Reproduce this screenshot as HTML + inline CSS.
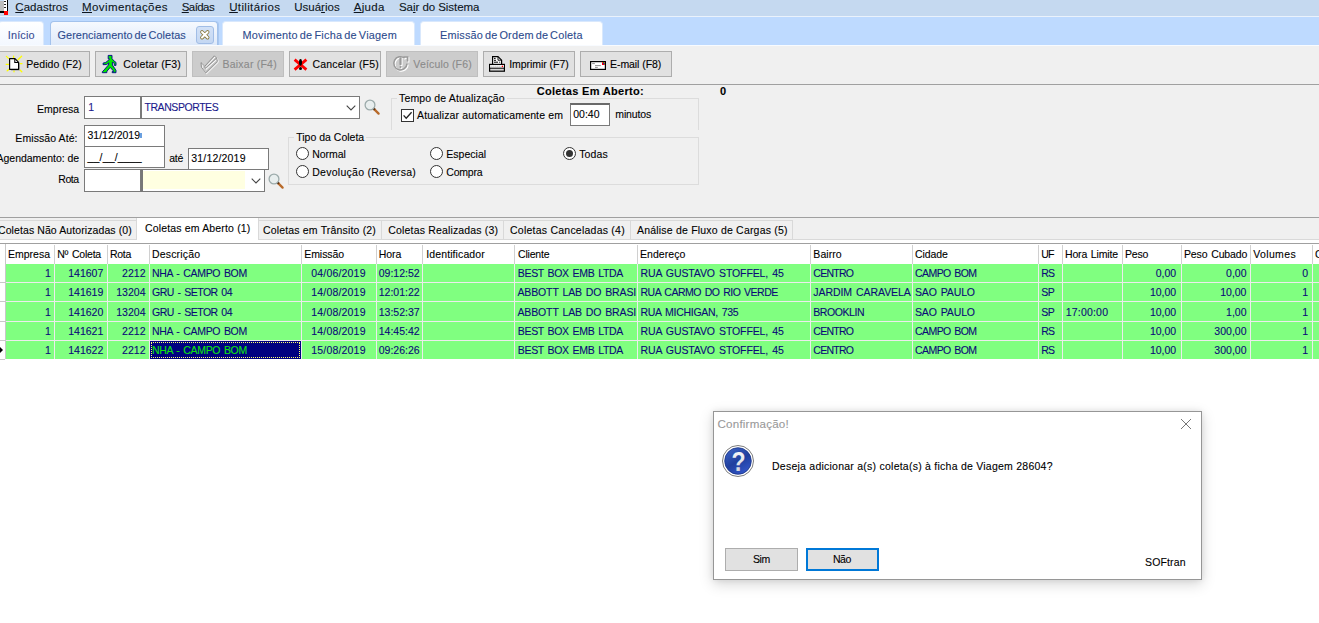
<!DOCTYPE html>
<html lang="pt-BR">
<head>
<meta charset="utf-8">
<title>Gerenciamento de Coletas</title>
<style>
*{box-sizing:border-box;margin:0;padding:0}
html,body{width:1319px;height:623px;overflow:hidden;background:#fff}
body{position:relative;font-family:"Liberation Sans",Arial,sans-serif;font-size:10.5px;color:#000}
.a{position:absolute}
.t{position:absolute;white-space:nowrap;-webkit-text-stroke:0.1px}
svg{position:absolute;overflow:visible}
#menubar{left:0;top:0;width:1319px;height:16px;background:#c5d9f0}
#menuline{left:0;top:16px;width:1319px;height:1px;background:#eaf2fc}
#tabstrip{left:0;top:17px;width:1319px;height:28px;background:#bedaff}
.mt{position:absolute;top:21px;height:24px;background:#fff;border-radius:4px 4px 0 0;border:1px solid #d9e8fc;border-bottom:none}
#toolbar{left:0;top:45px;width:1319px;height:39px;background:#f0f0f0}
.tb{position:absolute;top:51px;height:26px;background:#e1e1e1;border:1px solid #adadad}
.tb.dis{background:#cccccc;border-color:#bfbfbf}
#tswhite{left:0;top:45px;width:1319px;height:1px;background:#f8fbff}
#tbline{left:0;top:84px;width:1319px;height:1px;background:#a0a0a0}
#form{left:0;top:85px;width:1319px;height:132px;background:#f0f0f0}
.in{position:absolute;background:#fff;border:1px solid #7a7a7a}
.gb{position:absolute;border:1px solid #dcdcdc}
.rad{position:absolute;width:13px;height:13px;border-radius:50%;border:1px solid #333;background:#fff}
#formline{left:0;top:217px;width:1319px;height:1px;background:#a0a0a0}
#ptabs{left:0;top:218px;width:1319px;height:22px;background:#f0f0f0}
.pt{position:absolute;top:220px;height:20px;border:1px solid #d9d9d9;background:#f0f0f0}
#ptline{left:0;top:239px;width:1319px;height:1px;background:#d9d9d9}
#ptgap{left:0;top:240px;width:1319px;height:3px;background:#fff}
#gridtop{left:0;top:243px;width:1319px;height:1px;background:#a0a0a0}
.hl{position:absolute;top:245px;width:1px;height:19px;background:#d0d0d0}
.row{position:absolute;left:6px;width:1313px;background:#80ff80}
.vl{position:absolute;top:264px;width:1px;height:95px;background:#ececec}
#dlg{left:713px;top:411px;width:489px;height:169px;background:#fff;border:1px solid #969696;box-shadow:0 4px 13px rgba(0,0,0,.17),0 0 6px rgba(0,0,0,.08)}
.btn{position:absolute;background:#e1e1e1;border:1px solid #adadad}
</style>
</head>
<body>
<div id="menubar" class="a"></div><div id="menuline" class="a"></div>
<span class="t" style="left:15.30px;top:-0.48px;font-size:11.5px;line-height:15px;color:#0d1520;letter-spacing:0.035px;"><u style="text-decoration-thickness:1px;text-underline-offset:0.7px">C</u>adastros</span>
<span class="t" style="left:82.00px;top:-0.48px;font-size:11.5px;line-height:15px;color:#0d1520;letter-spacing:0.411px;"><u style="text-decoration-thickness:1px;text-underline-offset:0.7px">M</u>ovimentações</span>
<span class="t" style="left:181.70px;top:-0.48px;font-size:11.5px;line-height:15px;color:#0d1520;letter-spacing:-0.562px;"><u style="text-decoration-thickness:1px;text-underline-offset:0.7px">S</u>aídas</span>
<span class="t" style="left:229.20px;top:-0.48px;font-size:11.5px;line-height:15px;color:#0d1520;letter-spacing:0.350px;"><u style="text-decoration-thickness:1px;text-underline-offset:0.7px">U</u>tilitários</span>
<span class="t" style="left:294.20px;top:-0.48px;font-size:11.5px;line-height:15px;color:#0d1520;letter-spacing:0.013px;">Usuá<u style="text-decoration-thickness:1px;text-underline-offset:0.7px">r</u>ios</span>
<span class="t" style="left:353.70px;top:-0.48px;font-size:11.5px;line-height:15px;color:#0d1520;letter-spacing:0.345px;"><u style="text-decoration-thickness:1px;text-underline-offset:0.7px">A</u>juda</span>
<span class="t" style="left:399.00px;top:-0.48px;font-size:11.5px;line-height:15px;color:#0d1520;letter-spacing:-0.050px;">Sa<u style="text-decoration-thickness:1px;text-underline-offset:0.7px">i</u>r do Sistema</span>
<div class="a" style="left:0;top:1px;width:4px;height:11px;background:#bdbdbd"></div><div class="a" style="left:4px;top:0;width:4px;height:11px;background:#fff;border-right:1px solid #000"></div><div class="a" style="left:4px;top:1px;width:2px;height:8px;background:repeating-linear-gradient(#222 0 1px,#fff 1px 3px)"></div><div class="a" style="left:0;top:11px;width:8px;height:1.5px;background:#000"></div><div class="a" style="left:4px;top:11.3px;width:4px;height:3.5px;background:#ff0000"></div>
<div id="tabstrip" class="a"></div>
<div class="mt" style="left:-2px;width:46px;background:linear-gradient(#fff,#f3f8ff)"></div>
<span class="t" style="left:7.80px;top:27.92px;font-size:10.9px;line-height:14px;color:#3a4c94;letter-spacing:0.134px;">Início</span>
<div class="mt" style="left:50px;width:168px;background:linear-gradient(#f6f9fe,#dfeafa);border-color:#a3c2ec;box-shadow:1px 0 0 #a9c7ef"></div>
<span class="t" style="left:57.50px;top:27.92px;font-size:10.9px;line-height:14px;color:#2d4b8d;letter-spacing:0.050px;word-spacing:-1.2px;">Gerenciamento de Coletas</span>
<div class="a" style="left:196px;top:26px;width:18px;height:18px;border:1px solid #a1bde6;border-radius:3px;background:linear-gradient(#d2e1f7,#c4d7f2)"></div>
<svg style="left:199.7px;top:29.8px" width="9.6" height="9.6" viewBox="0 0 10 10"><path d="M2.1 2.1 L7.9 7.9 M7.9 2.1 L2.1 7.9" stroke="#8a7a3c" stroke-width="3.9" stroke-linecap="round"/><path d="M2.1 2.1 L7.9 7.9 M7.9 2.1 L2.1 7.9" stroke="#fff" stroke-width="2.1" stroke-linecap="round"/></svg>
<div class="mt" style="left:222px;width:193px"></div>
<span class="t" style="left:242.50px;top:27.92px;font-size:10.9px;line-height:14px;color:#2d4b8d;letter-spacing:0.224px;word-spacing:-1.2px;">Movimento de Ficha de Viagem</span>
<div class="mt" style="left:420px;width:183px"></div>
<span class="t" style="left:440.00px;top:27.92px;font-size:10.9px;line-height:14px;color:#2d4b8d;letter-spacing:0.177px;word-spacing:-1.2px;">Emissão de Ordem de Coleta</span>
<div id="toolbar" class="a"></div><div id="tswhite" class="a"></div>
<div class="tb" style="left:-1px;width:91px"></div>
<span class="t" style="left:26.30px;top:56.86px;font-size:10.5px;line-height:14px;color:#000;letter-spacing:0.054px;">Pedido (F2)</span>
<div class="tb" style="left:95px;width:92px"></div>
<span class="t" style="left:123.30px;top:56.86px;font-size:10.5px;line-height:14px;color:#000;letter-spacing:0.135px;">Coletar (F3)</span>
<div class="tb dis" style="left:192px;width:92px"></div>
<span class="t" style="left:222.50px;top:56.86px;font-size:10.5px;line-height:14px;color:#8a8a8a;letter-spacing:0.226px;">Baixar (F4)</span>
<div class="tb" style="left:289px;width:92px"></div>
<span class="t" style="left:312.50px;top:56.86px;font-size:10.5px;line-height:14px;color:#000;letter-spacing:0.168px;">Cancelar (F5)</span>
<div class="tb dis" style="left:386px;width:92px"></div>
<span class="t" style="left:413.30px;top:56.86px;font-size:10.5px;line-height:14px;color:#8a8a8a;letter-spacing:0.163px;">Veículo (F6)</span>
<div class="tb" style="left:483px;width:92px"></div>
<span class="t" style="left:509.20px;top:56.86px;font-size:10.5px;line-height:14px;color:#000;letter-spacing:-0.048px;">Imprimir (F7)</span>
<div class="tb" style="left:580px;width:92px"></div>
<span class="t" style="left:610.00px;top:56.86px;font-size:10.5px;line-height:14px;color:#000;letter-spacing:-0.062px;">E-mail (F8)</span>
<svg style="left:5px;top:55px" width="18" height="18" viewBox="0 0 18 18"><g stroke="#ffff00" stroke-width="1.3" stroke-linecap="round"><path d="M1.4 1.4 L3.4 3.4 M8.6 1.2 V2.6 M16.6 1.2 L13 4.8 M1.2 9.3 H3.6 M15 8.6 H17 M2.2 15.8 L3.8 14.4 M9 16.8 V15.6 M16.8 16.8 L15 15"/></g><path d="M5.2 4.2 H10 L13.8 8 V15 H5.2 Z" fill="#9a9a9a" transform="translate(0.8,0.6)"/><path d="M4.6 3.7 H10 L13.6 7.3 V14.3 H4.6 Z" fill="#fff" stroke="#000" stroke-width="1.2" stroke-linejoin="round"/><path d="M9.8 3.9 V7.5 H13.4" fill="none" stroke="#000" stroke-width="1.1"/></svg>
<svg style="left:102px;top:55px" width="15" height="18" viewBox="0 0 15 18"><g fill="#00e800" stroke="#00008c" stroke-width="0.9" stroke-linejoin="round"><path d="M6.2 0.4 H10 V3.6 L12 6 L14 7.4 V10.4 H12.3 V8.4 L11.8 8 L10.4 7.2 V10 L13 13.8 L14 15.4 V17.7 H10.2 V16.6 L11.8 16.3 L8.2 12.4 L5 16.2 L4.8 17.7 H0.3 V16.8 L2.2 14.8 L6.2 10.2 L7 7.8 L4.6 9.5 L1.1 9.7 V8.1 L3.8 7.4 L7.2 4.6 L7.4 3.8 H6.2 Z"/></g></svg>
<svg style="left:200px;top:55px" width="19" height="19" viewBox="0 0 19 19"><g stroke="#fff" transform="translate(0.9,0.9)"><path d="M1 7.6 L4.8 11.2 L14.4 0.8 L16.6 3 M1 7.6 L1.4 12.2 L5.8 17.8 L17.4 6.4 L16.6 3 M4.8 11.2 L5.2 13.4 L16.6 3" fill="none" stroke-width="1" stroke-linejoin="round"/></g><g stroke="#8f8f8f"><path d="M1 7.6 L4.8 11.2 L14.4 0.8 L16.6 3 M1 7.6 L1.4 12.2 L5.8 17.8 L17.4 6.4 L16.6 3 M4.8 11.2 L5.2 13.4 L16.6 3" fill="none" stroke-width="1" stroke-linejoin="round"/></g></svg>
<svg style="left:293px;top:58px" width="15" height="13" viewBox="0 0 15 13"><path d="M1.6 1.6 L13.4 11.6 M13.4 1.6 L1.6 11.6" stroke="#ff0000" stroke-width="2.8"/><ellipse cx="7.5" cy="4.3" rx="1.5" ry="3.4" fill="#000"/><circle cx="7.5" cy="10.5" r="1.5" fill="#000"/></svg>
<svg style="left:392px;top:55px" width="18" height="18" viewBox="0 0 18 18"><g stroke="#fff" fill="#fff" transform="translate(1,1)"><path d="M12.6 3.2 A6.6 6.6 0 1 0 15 8.6" fill="none" stroke-width="1.5"/><path d="M11.4 2 H15.6 V6.4" fill="none" stroke-width="1.6"/><path d="M8.5 3.4 V9.2" stroke-width="2.2" stroke-linecap="round"/><circle cx="8.5" cy="12" r="1" stroke="none"/></g><g stroke="#9a9a9a" fill="#9a9a9a"><path d="M12.6 3.2 A6.6 6.6 0 1 0 15 8.6" fill="none" stroke-width="1.5"/><path d="M11.4 2 H15.6 V6.4" fill="none" stroke-width="1.6"/><path d="M8.5 3.4 V9.2" stroke-width="2.2" stroke-linecap="round"/><circle cx="8.5" cy="12" r="1" stroke="none"/></g></svg>
<svg style="left:489px;top:56px" width="16" height="16" viewBox="0 0 16 16"><path d="M3.6 8 V0.6 H9 L12.6 4.2 V8" fill="#fff" stroke="#000" stroke-width="1.2"/><path d="M9 1 V4.2 H12.4" fill="none" stroke="#000" stroke-width="0.9"/><path d="M5 2.4 H6.6 M5 4.3 H7 M5 6.2 H9 M10.2 6.2 H11.2" stroke="#000" stroke-width="1"/><rect x="0.6" y="8.4" width="14.8" height="6.8" fill="#d6d6d6" stroke="#000" stroke-width="1.2"/><rect x="1.2" y="9" width="13.6" height="2.8" fill="#fff"/><path d="M1.6 10.4 H12" stroke="#c0c0c0" stroke-width="1.6" stroke-dasharray="1 1"/><circle cx="13.4" cy="10.4" r="0.8" fill="#ff0000"/><path d="M0.6 12.2 H15.4" stroke="#000" stroke-width="1"/></svg>
<svg style="left:590px;top:61px" width="16" height="9" viewBox="0 0 16 9"><rect x="0.6" y="0.6" width="14.8" height="7.8" fill="#fff" stroke="#000" stroke-width="1.2"/><rect x="12" y="1.2" width="2.8" height="2.8" fill="#ff0000"/><rect x="13" y="1.2" width="1" height="1" fill="#00c000"/><rect x="13" y="2.2" width="1" height="1" fill="#0000ff"/><rect x="14" y="2.2" width="0.8" height="1" fill="#00c000"/><path d="M2.2 2.6 H4.8 M5 4.6 H10.8 M5 6.4 H7.8" stroke="#707070" stroke-width="0.8"/></svg>
<div id="tbline" class="a"></div>
<div id="form" class="a"></div>
<span class="t" style="left:37.00px;top:102.06px;font-size:10.5px;line-height:14px;color:#000;letter-spacing:0.031px;">Empresa</span>
<span class="t" style="left:15.30px;top:130.86px;font-size:10.5px;line-height:14px;color:#000;letter-spacing:0.084px;">Emissão Até:</span>
<span class="t" style="left:-3.50px;top:150.86px;font-size:10.5px;line-height:14px;color:#000;letter-spacing:-0.015px;">Agendamento: de</span>
<span class="t" style="left:58.30px;top:171.66px;font-size:10.5px;line-height:14px;color:#000;letter-spacing:-0.429px;">Rota</span>
<div class="in" style="left:84px;top:96px;width:57px;height:23px"></div>
<div class="in" style="left:141px;top:96px;width:219px;height:23px"></div>
<span class="t" style="left:88.30px;top:100.06px;font-size:10.5px;line-height:14px;color:#1a1a8c;transform:scaleY(1.1);transform-origin:0 10.64px;">1</span>
<span class="t" style="left:144.50px;top:100.06px;font-size:10.5px;line-height:14px;color:#1a1a8c;letter-spacing:-0.438px;transform:scaleY(1.1);transform-origin:0 10.64px;">TRANSPORTES</span>
<svg style="left:346px;top:105px" width="10" height="6" viewBox="0 0 10 6"><path d="M0.7 0.7 L5 5 L9.3 0.7" fill="none" stroke="#444" stroke-width="1.1"/></svg>
<svg style="left:362.8px;top:98.2px" width="18" height="18" viewBox="0 0 18 18"><path d="M10.6 10.6 L15.6 15.6" stroke="#b86a2a" stroke-width="2.3" stroke-linecap="round"/><path d="M10.4 10.4 L11.8 11.8" stroke="#5a2e10" stroke-width="2.3"/><circle cx="7" cy="7" r="4.9" fill="#e8eeee" stroke="#9cabab" stroke-width="1.3"/></svg>
<div class="in" style="left:84px;top:125px;width:81px;height:22px"></div>
<span class="t" style="left:87.50px;top:128.36px;font-size:10.5px;line-height:14px;color:#000;letter-spacing:-0.007px;">31/12/2019</span>
<div class="a" style="left:140px;top:132.5px;width:1.5px;height:5px;background:#6aa0e0"></div>
<div class="in" style="left:84px;top:146px;width:81px;height:22px"></div>
<span class="t" style="left:87.50px;top:149.56px;font-size:10.5px;line-height:14px;color:#000;letter-spacing:0.182px;">__/__/____</span>
<span class="t" style="left:169.20px;top:150.86px;font-size:10.5px;line-height:14px;color:#000;letter-spacing:-0.255px;">até</span>
<div class="in" style="left:188px;top:148px;width:81px;height:22px"></div>
<span class="t" style="left:191.30px;top:150.86px;font-size:10.5px;line-height:14px;color:#000;letter-spacing:0.182px;">31/12/2019</span>
<div class="in" style="left:84px;top:169px;width:57px;height:23px"></div>
<div class="in" style="left:141px;top:169px;width:124px;height:23px;border-left:2px solid #777"></div>
<div class="a" style="left:143px;top:171px;width:102px;height:18px;background:#ffffe1"></div>
<svg style="left:251px;top:178px" width="10" height="6" viewBox="0 0 10 6"><path d="M0.7 0.7 L5 5 L9.3 0.7" fill="none" stroke="#444" stroke-width="1.1"/></svg>
<svg style="left:267.2px;top:171.6px" width="18" height="18" viewBox="0 0 18 18"><path d="M10.6 10.6 L15.6 15.6" stroke="#b86a2a" stroke-width="2.3" stroke-linecap="round"/><path d="M10.4 10.4 L11.8 11.8" stroke="#5a2e10" stroke-width="2.3"/><circle cx="7" cy="7" r="4.9" fill="#e8eeee" stroke="#9cabab" stroke-width="1.3"/></svg>
<div class="gb" style="left:391px;top:98px;width:308px;height:32px;border-bottom:none"></div>
<div class="a" style="left:397px;top:93px;width:110px;height:12px;background:#f0f0f0"></div>
<span class="t" style="left:399.00px;top:90.86px;font-size:10.5px;line-height:14px;color:#000;letter-spacing:0.156px;">Tempo de Atualização</span>
<div class="a" style="left:401px;top:109px;width:13px;height:13px;border:1px solid #333;background:#fff"></div>
<svg style="left:401px;top:109px" width="13" height="13" viewBox="0 0 13 13"><path d="M2.6 6.4 L5.2 9.2 L10.6 3.2" fill="none" stroke="#222" stroke-width="1.3"/></svg>
<span class="t" style="left:417.00px;top:108.06px;font-size:10.5px;line-height:14px;color:#000;letter-spacing:0.155px;">Atualizar automaticamente em</span>
<div class="in" style="left:570px;top:103px;width:40px;height:23px;border-top:2px solid #6a6a6a"></div>
<span class="t" style="left:573.30px;top:107.16px;font-size:10.5px;line-height:14px;color:#000;letter-spacing:-0.020px;">00:40</span>
<span class="t" style="left:615.30px;top:107.16px;font-size:10.5px;line-height:14px;color:#000;letter-spacing:-0.128px;">minutos</span>
<span class="t" style="left:536.70px;top:83.99px;font-size:11px;line-height:14px;color:#000;letter-spacing:0.313px;font-weight:bold;">Coletas Em Aberto:</span>
<span class="t" style="left:720.00px;top:83.99px;font-size:11px;line-height:14px;color:#000;letter-spacing:-0.750px;font-weight:bold;">0</span>
<div class="gb" style="left:288px;top:137px;width:411px;height:48px"></div>
<div class="a" style="left:294px;top:131px;width:72px;height:12px;background:#f0f0f0"></div>
<span class="t" style="left:296.20px;top:130.06px;font-size:10.5px;line-height:14px;color:#000;letter-spacing:0.007px;">Tipo da Coleta</span>
<div class="rad" style="left:296px;top:147px"></div>
<span class="t" style="left:312.20px;top:147.16px;font-size:10.5px;line-height:14px;color:#000;letter-spacing:-0.049px;">Normal</span>
<div class="rad" style="left:296px;top:165px"></div>
<span class="t" style="left:312.20px;top:165.06px;font-size:10.5px;line-height:14px;color:#000;letter-spacing:0.276px;">Devolução (Reversa)</span>
<div class="rad" style="left:430px;top:147px"></div>
<span class="t" style="left:446.30px;top:147.16px;font-size:10.5px;line-height:14px;color:#000;letter-spacing:0.028px;">Especial</span>
<div class="rad" style="left:430px;top:165px"></div>
<span class="t" style="left:446.30px;top:165.06px;font-size:10.5px;line-height:14px;color:#000;letter-spacing:-0.232px;">Compra</span>
<div class="rad" style="left:563px;top:147px"></div>
<div class="a" style="left:566px;top:150px;width:7px;height:7px;border-radius:50%;background:#333"></div>
<span class="t" style="left:579.20px;top:147.16px;font-size:10.5px;line-height:14px;color:#000;letter-spacing:0.142px;">Todas</span>
<div id="formline" class="a"></div>
<div id="ptabs" class="a"></div><div id="ptline" class="a"></div><div id="ptgap" class="a"></div>
<div class="pt" style="left:-2px;width:139px"></div>
<div class="pt" style="left:258px;width:124px"></div>
<div class="pt" style="left:381px;width:123px"></div>
<div class="pt" style="left:503px;width:128px"></div>
<div class="pt" style="left:630px;width:163px"></div>
<div class="a" style="left:136px;top:218px;width:123px;height:22px;background:#fff;border-left:1px solid #d9d9d9;border-right:1px solid #d9d9d9"></div>
<span class="t" style="left:-2.00px;top:222.86px;font-size:10.5px;line-height:14px;color:#000;letter-spacing:0.091px;">Coletas Não Autorizadas (0)</span>
<span class="t" style="left:145.00px;top:221.16px;font-size:10.5px;line-height:14px;color:#000;letter-spacing:0.158px;">Coletas em Aberto (1)</span>
<span class="t" style="left:263.00px;top:222.86px;font-size:10.5px;line-height:14px;color:#000;letter-spacing:0.167px;">Coletas em Trânsito (2)</span>
<span class="t" style="left:388.30px;top:222.86px;font-size:10.5px;line-height:14px;color:#000;letter-spacing:0.166px;">Coletas Realizadas (3)</span>
<span class="t" style="left:510.00px;top:222.86px;font-size:10.5px;line-height:14px;color:#000;letter-spacing:0.236px;">Coletas Canceladas (4)</span>
<span class="t" style="left:637.00px;top:222.86px;font-size:10.5px;line-height:14px;color:#000;letter-spacing:0.198px;">Análise de Fluxo de Cargas (5)</span>
<div id="gridtop" class="a"></div>
<div class="hl" style="left:5px"></div>
<div class="hl" style="left:54px"></div>
<div class="hl" style="left:107px"></div>
<div class="hl" style="left:149px"></div>
<div class="hl" style="left:301px"></div>
<div class="hl" style="left:376px"></div>
<div class="hl" style="left:422px"></div>
<div class="hl" style="left:514px"></div>
<div class="hl" style="left:637px"></div>
<div class="hl" style="left:810px"></div>
<div class="hl" style="left:912px"></div>
<div class="hl" style="left:1038px"></div>
<div class="hl" style="left:1062px"></div>
<div class="hl" style="left:1122px"></div>
<div class="hl" style="left:1181px"></div>
<div class="hl" style="left:1250px"></div>
<div class="hl" style="left:1312px"></div>
<span class="t" style="left:8.00px;top:247.06px;font-size:10.5px;line-height:14px;color:#000;word-spacing:1px;">Empresa</span>
<span class="t" style="left:57.20px;top:247.06px;font-size:10.5px;line-height:14px;color:#000;letter-spacing:-0.211px;word-spacing:1px;">Nº Coleta</span>
<span class="t" style="left:110.00px;top:247.06px;font-size:10.5px;line-height:14px;color:#000;letter-spacing:-0.296px;word-spacing:1px;">Rota</span>
<span class="t" style="left:152.00px;top:247.06px;font-size:10.5px;line-height:14px;color:#000;letter-spacing:0.164px;word-spacing:1px;">Descrição</span>
<span class="t" style="left:304.20px;top:247.06px;font-size:10.5px;line-height:14px;color:#000;letter-spacing:-0.044px;word-spacing:1px;">Emissão</span>
<span class="t" style="left:378.70px;top:247.06px;font-size:10.5px;line-height:14px;color:#000;letter-spacing:-0.055px;word-spacing:1px;">Hora</span>
<span class="t" style="left:426.30px;top:247.06px;font-size:10.5px;line-height:14px;color:#000;letter-spacing:0.100px;word-spacing:1px;">Identificador</span>
<span class="t" style="left:518.00px;top:247.06px;font-size:10.5px;line-height:14px;color:#000;letter-spacing:-0.198px;word-spacing:1px;">Cliente</span>
<span class="t" style="left:640.00px;top:247.06px;font-size:10.5px;line-height:14px;color:#000;letter-spacing:0.050px;word-spacing:1px;">Endereço</span>
<span class="t" style="left:813.30px;top:247.06px;font-size:10.5px;line-height:14px;color:#000;letter-spacing:0.077px;word-spacing:1px;">Bairro</span>
<span class="t" style="left:915.00px;top:247.06px;font-size:10.5px;line-height:14px;color:#000;letter-spacing:-0.096px;word-spacing:1px;">Cidade</span>
<span class="t" style="left:1041.20px;top:247.06px;font-size:10.5px;line-height:14px;color:#000;letter-spacing:-0.750px;word-spacing:1px;">UF</span>
<span class="t" style="left:1065.00px;top:247.06px;font-size:10.5px;line-height:14px;color:#000;letter-spacing:-0.169px;word-spacing:1px;">Hora Limite</span>
<span class="t" style="left:1125.00px;top:247.06px;font-size:10.5px;line-height:14px;color:#000;letter-spacing:-0.213px;word-spacing:1px;">Peso</span>
<span class="t" style="left:1184.00px;top:247.06px;font-size:10.5px;line-height:14px;color:#000;letter-spacing:-0.134px;word-spacing:1px;">Peso Cubado</span>
<span class="t" style="left:1253.20px;top:247.06px;font-size:10.5px;line-height:14px;color:#000;letter-spacing:0.370px;word-spacing:1px;">Volumes</span>
<span class="t" style="left:1315.00px;top:247.06px;font-size:10.5px;line-height:14px;color:#000;">C</span>
<div class="a" style="left:6px;top:264px;width:1313px;height:95px;background:#ececec"></div>
<div class="row" style="top:264.00px;height:18.00px"></div>
<div class="row" style="top:283.00px;height:18.00px"></div>
<div class="row" style="top:302.00px;height:19.00px"></div>
<div class="row" style="top:322.00px;height:18.00px"></div>
<div class="row" style="top:341.00px;height:18.00px"></div>
<div class="vl" style="left:54px"></div>
<div class="vl" style="left:107px"></div>
<div class="vl" style="left:149px"></div>
<div class="vl" style="left:301px"></div>
<div class="vl" style="left:376px"></div>
<div class="vl" style="left:422px"></div>
<div class="vl" style="left:514px"></div>
<div class="vl" style="left:637px"></div>
<div class="vl" style="left:810px"></div>
<div class="vl" style="left:912px"></div>
<div class="vl" style="left:1038px"></div>
<div class="vl" style="left:1062px"></div>
<div class="vl" style="left:1122px"></div>
<div class="vl" style="left:1181px"></div>
<div class="vl" style="left:1250px"></div>
<div class="vl" style="left:1312px"></div>
<div class="a" style="left:0;top:282.00px;width:5px;height:1px;background:#c8c8c8"></div>
<div class="a" style="left:0;top:301.00px;width:5px;height:1px;background:#c8c8c8"></div>
<div class="a" style="left:0;top:321.00px;width:5px;height:1px;background:#c8c8c8"></div>
<div class="a" style="left:0;top:340.00px;width:5px;height:1px;background:#c8c8c8"></div>
<div class="a" style="left:0;top:359.00px;width:5px;height:1px;background:#c8c8c8"></div>
<div class="a" style="left:5px;top:244px;width:1px;height:115px;background:#c8c8c8"></div>
<svg style="left:0;top:347px" width="3" height="6" viewBox="0 0 3 6"><path d="M0 0 L3 3 L0 6 Z" fill="#000"/></svg>
<span class="t" style="left:45.00px;top:266.16px;font-size:10.5px;line-height:14px;color:#0a0a78;letter-spacing:-0.750px;word-spacing:1.2px;">1</span>
<span class="t" style="left:68.20px;top:266.16px;font-size:10.5px;line-height:14px;color:#0a0a78;letter-spacing:0.011px;word-spacing:1.2px;">141607</span>
<span class="t" style="left:122.10px;top:266.16px;font-size:10.5px;line-height:14px;color:#0a0a78;letter-spacing:0.014px;word-spacing:1.2px;">2212</span>
<span class="t" style="left:152.00px;top:266.16px;font-size:10.5px;line-height:14px;color:#0a0a78;letter-spacing:-0.333px;word-spacing:1.2px;">NHA - CAMPO BOM</span>
<span class="t" style="left:311.30px;top:266.16px;font-size:10.5px;line-height:14px;color:#0a0a78;letter-spacing:0.182px;word-spacing:1.2px;">04/06/2019</span>
<span class="t" style="left:378.70px;top:266.16px;font-size:10.5px;line-height:14px;color:#0a0a78;letter-spacing:0.018px;word-spacing:1.2px;">09:12:52</span>
<span class="t" style="left:517.80px;top:266.16px;font-size:10.5px;line-height:14px;color:#0a0a78;letter-spacing:-0.317px;word-spacing:1.2px;">BEST BOX EMB LTDA</span>
<span class="t" style="left:640.50px;top:266.16px;font-size:10.5px;line-height:14px;color:#0a0a78;letter-spacing:-0.095px;word-spacing:1.2px;">RUA GUSTAVO STOFFEL, 45</span>
<span class="t" style="left:813.30px;top:266.16px;font-size:10.5px;line-height:14px;color:#0a0a78;letter-spacing:-0.750px;word-spacing:1.2px;">CENTRO</span>
<span class="t" style="left:915.00px;top:266.16px;font-size:10.5px;line-height:14px;color:#0a0a78;letter-spacing:-0.568px;word-spacing:1.2px;">CAMPO BOM</span>
<span class="t" style="left:1041.20px;top:266.16px;font-size:10.5px;line-height:14px;color:#0a0a78;letter-spacing:-0.750px;word-spacing:1.2px;">RS</span>
<span class="t" style="left:1155.75px;top:266.16px;font-size:10.5px;line-height:14px;color:#0a0a78;word-spacing:1.2px;">0,00</span>
<span class="t" style="left:1226.05px;top:266.16px;font-size:10.5px;line-height:14px;color:#0a0a78;word-spacing:1.2px;">0,00</span>
<span class="t" style="left:1302.35px;top:266.16px;font-size:10.5px;line-height:14px;color:#0a0a78;letter-spacing:0.006px;word-spacing:1.2px;">0</span>
<span class="t" style="left:45.00px;top:285.41px;font-size:10.5px;line-height:14px;color:#0a0a78;letter-spacing:-0.750px;word-spacing:1.2px;">1</span>
<span class="t" style="left:68.20px;top:285.41px;font-size:10.5px;line-height:14px;color:#0a0a78;letter-spacing:0.011px;word-spacing:1.2px;">141619</span>
<span class="t" style="left:116.25px;top:285.41px;font-size:10.5px;line-height:14px;color:#0a0a78;letter-spacing:0.012px;word-spacing:1.2px;">13204</span>
<span class="t" style="left:152.00px;top:285.41px;font-size:10.5px;line-height:14px;color:#0a0a78;letter-spacing:-0.488px;word-spacing:1.2px;">GRU - SETOR 04</span>
<span class="t" style="left:311.30px;top:285.41px;font-size:10.5px;line-height:14px;color:#0a0a78;letter-spacing:0.182px;word-spacing:1.2px;">14/08/2019</span>
<span class="t" style="left:378.70px;top:285.41px;font-size:10.5px;line-height:14px;color:#0a0a78;letter-spacing:0.018px;word-spacing:1.2px;">12:01:22</span>
<span class="t" style="left:517.50px;top:285.41px;font-size:10.5px;line-height:14px;color:#0a0a78;letter-spacing:-0.143px;word-spacing:1.2px;">ABBOTT LAB DO BRASI</span>
<span class="t" style="left:640.50px;top:285.41px;font-size:10.5px;line-height:14px;color:#0a0a78;letter-spacing:-0.473px;word-spacing:1.2px;">RUA CARMO DO RIO VERDE</span>
<span class="t" style="left:813.30px;top:285.41px;font-size:10.5px;line-height:14px;color:#0a0a78;letter-spacing:-0.068px;word-spacing:1.2px;">JARDIM CARAVELA</span>
<span class="t" style="left:915.00px;top:285.41px;font-size:10.5px;line-height:14px;color:#0a0a78;letter-spacing:-0.139px;word-spacing:1.2px;">SAO PAULO</span>
<span class="t" style="left:1041.20px;top:285.41px;font-size:10.5px;line-height:14px;color:#0a0a78;letter-spacing:-0.516px;word-spacing:1.2px;">SP</span>
<span class="t" style="left:1149.90px;top:285.41px;font-size:10.5px;line-height:14px;color:#0a0a78;word-spacing:1.2px;">10,00</span>
<span class="t" style="left:1220.20px;top:285.41px;font-size:10.5px;line-height:14px;color:#0a0a78;word-spacing:1.2px;">10,00</span>
<span class="t" style="left:1302.35px;top:285.41px;font-size:10.5px;line-height:14px;color:#0a0a78;letter-spacing:0.006px;word-spacing:1.2px;">1</span>
<span class="t" style="left:45.00px;top:304.66px;font-size:10.5px;line-height:14px;color:#0a0a78;letter-spacing:-0.750px;word-spacing:1.2px;">1</span>
<span class="t" style="left:68.20px;top:304.66px;font-size:10.5px;line-height:14px;color:#0a0a78;letter-spacing:0.011px;word-spacing:1.2px;">141620</span>
<span class="t" style="left:116.25px;top:304.66px;font-size:10.5px;line-height:14px;color:#0a0a78;letter-spacing:0.012px;word-spacing:1.2px;">13204</span>
<span class="t" style="left:152.00px;top:304.66px;font-size:10.5px;line-height:14px;color:#0a0a78;letter-spacing:-0.488px;word-spacing:1.2px;">GRU - SETOR 04</span>
<span class="t" style="left:311.30px;top:304.66px;font-size:10.5px;line-height:14px;color:#0a0a78;letter-spacing:0.182px;word-spacing:1.2px;">14/08/2019</span>
<span class="t" style="left:378.70px;top:304.66px;font-size:10.5px;line-height:14px;color:#0a0a78;letter-spacing:0.018px;word-spacing:1.2px;">13:52:37</span>
<span class="t" style="left:517.50px;top:304.66px;font-size:10.5px;line-height:14px;color:#0a0a78;letter-spacing:-0.143px;word-spacing:1.2px;">ABBOTT LAB DO BRASI</span>
<span class="t" style="left:640.50px;top:304.66px;font-size:10.5px;line-height:14px;color:#0a0a78;letter-spacing:-0.285px;word-spacing:1.2px;">RUA MICHIGAN, 735</span>
<span class="t" style="left:813.30px;top:304.66px;font-size:10.5px;line-height:14px;color:#0a0a78;letter-spacing:-0.438px;word-spacing:1.2px;">BROOKLIN</span>
<span class="t" style="left:915.00px;top:304.66px;font-size:10.5px;line-height:14px;color:#0a0a78;letter-spacing:-0.139px;word-spacing:1.2px;">SAO PAULO</span>
<span class="t" style="left:1041.20px;top:304.66px;font-size:10.5px;line-height:14px;color:#0a0a78;letter-spacing:-0.516px;word-spacing:1.2px;">SP</span>
<span class="t" style="left:1065.70px;top:304.66px;font-size:10.5px;line-height:14px;color:#0a0a78;letter-spacing:0.204px;word-spacing:1.2px;">17:00:00</span>
<span class="t" style="left:1149.90px;top:304.66px;font-size:10.5px;line-height:14px;color:#0a0a78;word-spacing:1.2px;">10,00</span>
<span class="t" style="left:1226.05px;top:304.66px;font-size:10.5px;line-height:14px;color:#0a0a78;word-spacing:1.2px;">1,00</span>
<span class="t" style="left:1302.35px;top:304.66px;font-size:10.5px;line-height:14px;color:#0a0a78;letter-spacing:0.006px;word-spacing:1.2px;">1</span>
<span class="t" style="left:45.00px;top:323.91px;font-size:10.5px;line-height:14px;color:#0a0a78;letter-spacing:-0.750px;word-spacing:1.2px;">1</span>
<span class="t" style="left:68.20px;top:323.91px;font-size:10.5px;line-height:14px;color:#0a0a78;letter-spacing:0.011px;word-spacing:1.2px;">141621</span>
<span class="t" style="left:122.10px;top:323.91px;font-size:10.5px;line-height:14px;color:#0a0a78;letter-spacing:0.014px;word-spacing:1.2px;">2212</span>
<span class="t" style="left:152.00px;top:323.91px;font-size:10.5px;line-height:14px;color:#0a0a78;letter-spacing:-0.333px;word-spacing:1.2px;">NHA - CAMPO BOM</span>
<span class="t" style="left:311.30px;top:323.91px;font-size:10.5px;line-height:14px;color:#0a0a78;letter-spacing:0.182px;word-spacing:1.2px;">14/08/2019</span>
<span class="t" style="left:378.70px;top:323.91px;font-size:10.5px;line-height:14px;color:#0a0a78;letter-spacing:0.018px;word-spacing:1.2px;">14:45:42</span>
<span class="t" style="left:517.80px;top:323.91px;font-size:10.5px;line-height:14px;color:#0a0a78;letter-spacing:-0.317px;word-spacing:1.2px;">BEST BOX EMB LTDA</span>
<span class="t" style="left:640.50px;top:323.91px;font-size:10.5px;line-height:14px;color:#0a0a78;letter-spacing:-0.095px;word-spacing:1.2px;">RUA GUSTAVO STOFFEL, 45</span>
<span class="t" style="left:813.30px;top:323.91px;font-size:10.5px;line-height:14px;color:#0a0a78;letter-spacing:-0.750px;word-spacing:1.2px;">CENTRO</span>
<span class="t" style="left:915.00px;top:323.91px;font-size:10.5px;line-height:14px;color:#0a0a78;letter-spacing:-0.568px;word-spacing:1.2px;">CAMPO BOM</span>
<span class="t" style="left:1041.20px;top:323.91px;font-size:10.5px;line-height:14px;color:#0a0a78;letter-spacing:-0.750px;word-spacing:1.2px;">RS</span>
<span class="t" style="left:1149.90px;top:323.91px;font-size:10.5px;line-height:14px;color:#0a0a78;word-spacing:1.2px;">10,00</span>
<span class="t" style="left:1214.35px;top:323.91px;font-size:10.5px;line-height:14px;color:#0a0a78;letter-spacing:0.005px;word-spacing:1.2px;">300,00</span>
<span class="t" style="left:1302.35px;top:323.91px;font-size:10.5px;line-height:14px;color:#0a0a78;letter-spacing:0.006px;word-spacing:1.2px;">1</span>
<span class="t" style="left:45.00px;top:343.16px;font-size:10.5px;line-height:14px;color:#0a0a78;letter-spacing:-0.750px;word-spacing:1.2px;">1</span>
<span class="t" style="left:68.20px;top:343.16px;font-size:10.5px;line-height:14px;color:#0a0a78;letter-spacing:0.011px;word-spacing:1.2px;">141622</span>
<span class="t" style="left:122.10px;top:343.16px;font-size:10.5px;line-height:14px;color:#0a0a78;letter-spacing:0.014px;word-spacing:1.2px;">2212</span>
<div class="a" style="left:150px;top:341px;width:151px;height:18px;background:#000080;outline:1px dotted #ffff70;outline-offset:-2px"></div>
<span class="t" style="left:152.00px;top:343.16px;font-size:10.5px;line-height:14px;color:#10e010;letter-spacing:-0.333px;word-spacing:1.2px;">NHA - CAMPO BOM</span>
<span class="t" style="left:311.30px;top:343.16px;font-size:10.5px;line-height:14px;color:#0a0a78;letter-spacing:0.182px;word-spacing:1.2px;">15/08/2019</span>
<span class="t" style="left:378.70px;top:343.16px;font-size:10.5px;line-height:14px;color:#0a0a78;letter-spacing:0.018px;word-spacing:1.2px;">09:26:26</span>
<span class="t" style="left:517.80px;top:343.16px;font-size:10.5px;line-height:14px;color:#0a0a78;letter-spacing:-0.317px;word-spacing:1.2px;">BEST BOX EMB LTDA</span>
<span class="t" style="left:640.50px;top:343.16px;font-size:10.5px;line-height:14px;color:#0a0a78;letter-spacing:-0.095px;word-spacing:1.2px;">RUA GUSTAVO STOFFEL, 45</span>
<span class="t" style="left:813.30px;top:343.16px;font-size:10.5px;line-height:14px;color:#0a0a78;letter-spacing:-0.750px;word-spacing:1.2px;">CENTRO</span>
<span class="t" style="left:915.00px;top:343.16px;font-size:10.5px;line-height:14px;color:#0a0a78;letter-spacing:-0.568px;word-spacing:1.2px;">CAMPO BOM</span>
<span class="t" style="left:1041.20px;top:343.16px;font-size:10.5px;line-height:14px;color:#0a0a78;letter-spacing:-0.750px;word-spacing:1.2px;">RS</span>
<span class="t" style="left:1149.90px;top:343.16px;font-size:10.5px;line-height:14px;color:#0a0a78;word-spacing:1.2px;">10,00</span>
<span class="t" style="left:1214.35px;top:343.16px;font-size:10.5px;line-height:14px;color:#0a0a78;letter-spacing:0.005px;word-spacing:1.2px;">300,00</span>
<span class="t" style="left:1302.35px;top:343.16px;font-size:10.5px;line-height:14px;color:#0a0a78;letter-spacing:0.006px;word-spacing:1.2px;">1</span>
<div id="dlg" class="a"></div>
<span class="t" style="left:717.50px;top:415.98px;font-size:11.6px;line-height:15px;color:#999;letter-spacing:0.204px;">Confirmação!</span>
<svg style="left:1181px;top:419px" width="10" height="10" viewBox="0 0 10 10"><path d="M0 0 L10 10 M10 0 L0 10" stroke="#777" stroke-width="1"/></svg>
<svg style="left:722px;top:445px" width="32" height="32" viewBox="0 0 32 32"><defs><linearGradient id="qg" x1="0.2" y1="0" x2="0.8" y2="1"><stop offset="0" stop-color="#3b62c4"/><stop offset="0.5" stop-color="#1f3f9e"/><stop offset="1" stop-color="#3558cc"/></linearGradient><linearGradient id="qt" x1="0" y1="0" x2="0" y2="1"><stop offset="0" stop-color="#ffffff"/><stop offset="1" stop-color="#c8ccd4"/></linearGradient></defs><circle cx="16" cy="16" r="15.5" fill="#fff" stroke="#7d7d7d" stroke-width="1"/><circle cx="16" cy="16" r="13.3" fill="url(#qg)" stroke="#1c3688" stroke-width="0.8"/><text transform="translate(16.6,26.3) scale(0.84,1)" x="0" y="0" text-anchor="middle" font-family="Liberation Sans, sans-serif" font-weight="bold" font-size="27.5" fill="url(#qt)">?</text></svg>
<span class="t" style="left:772.00px;top:458.86px;font-size:10.5px;line-height:14px;color:#000;letter-spacing:0.243px;">Deseja adicionar a(s) coleta(s) à ficha de Viagem 28604?</span>
<div class="btn" style="left:725px;top:548px;width:73px;height:23px"></div>
<span class="t" style="left:753.00px;top:551.86px;font-size:10.5px;line-height:14px;color:#000;letter-spacing:-0.397px;">Sim</span>
<div class="btn" style="left:806px;top:548px;width:73px;height:23px;border:2px solid #0078d7"></div>
<span class="t" style="left:833.00px;top:551.86px;font-size:10.5px;line-height:14px;color:#000;letter-spacing:-0.483px;">Não</span>
<span class="t" style="left:1145.00px;top:555.16px;font-size:10.5px;line-height:14px;color:#000;letter-spacing:0.135px;">SOFtran</span>
</body>
</html>
